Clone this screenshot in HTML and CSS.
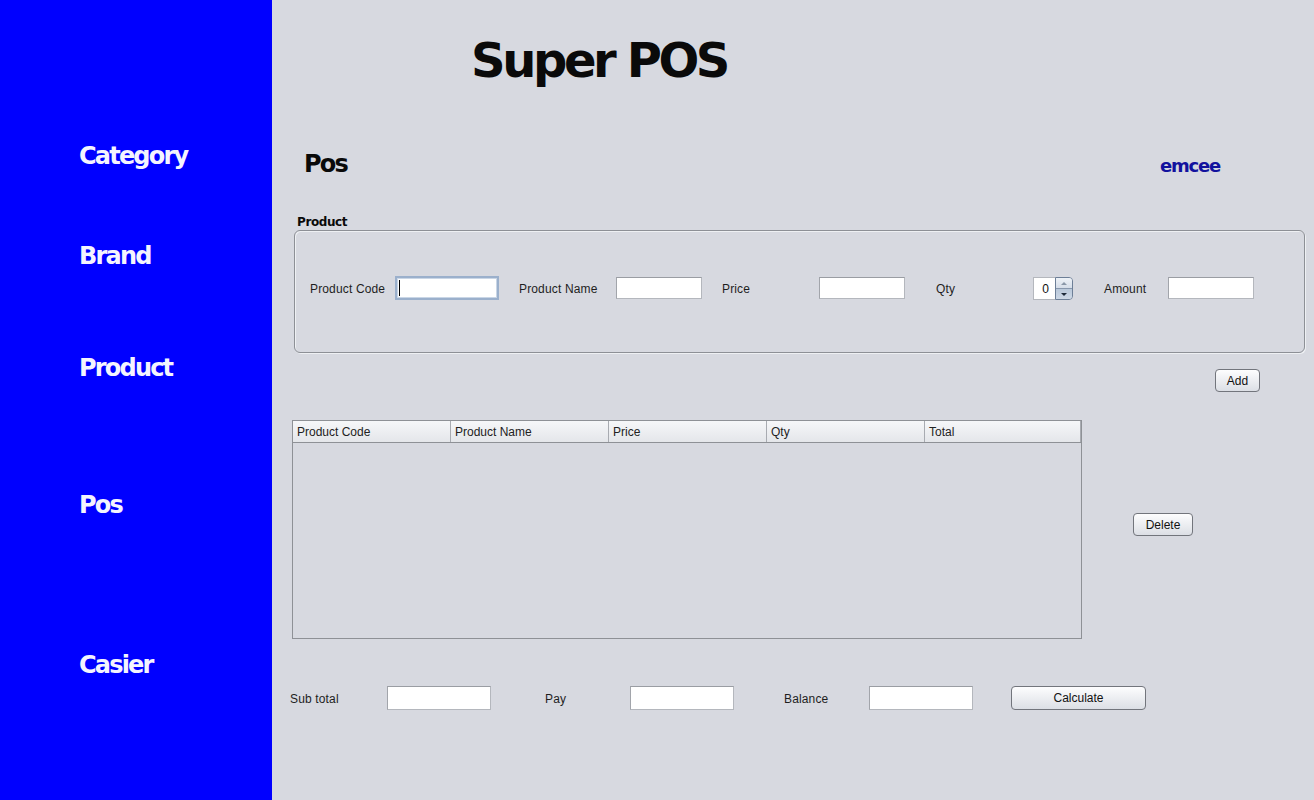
FILE: index.html
```html
<!DOCTYPE html>
<html>
<head>
<meta charset="utf-8">
<title>Super POS</title>
<link rel="stylesheet" href="styles.css">
</head>
<body>
<div class="app">
  <nav class="sidebar">
    <div class="nav-item nav-category">Category</div>
    <div class="nav-item nav-brand">Brand</div>
    <div class="nav-item nav-product">Product</div>
    <div class="nav-item nav-pos">Pos</div>
    <div class="nav-item nav-casier">Casier</div>
  </nav>
  <main class="main">
    <h1 class="title">Super POS</h1>
    <div class="page-head">
      <h2 class="page-title">Pos</h2>
      <div class="user">emcee</div>
    </div>
    <div class="group-label">Product</div>
    <div class="group">
      <div class="form-row">
        <label class="lbl w85">Product Code</label>
        <div class="field focused w104"><span class="caret"></span></div>
        <label class="lbl ml20 w97">Product Name</label>
        <div class="field w86"></div>
        <label class="lbl ml20 w97">Price</label>
        <div class="field w86"></div>
        <label class="lbl ml31 w97">Qty</label>
        <div class="spinner">
          <div class="spin-value">0</div>
          <div class="spin-btns">
            <div class="spin-up"><span class="tri-up"></span></div>
            <div class="spin-down"><span class="tri-down"></span></div>
          </div>
        </div>
        <label class="lbl ml31 w64">Amount</label>
        <div class="field w86"></div>
      </div>
    </div>
    <div class="add-row">
      <button class="btn btn-add">Add</button>
    </div>
    <div class="table-row">
      <div class="table">
        <div class="thead">
          <div class="th">Product Code</div>
          <div class="th">Product Name</div>
          <div class="th">Price</div>
          <div class="th">Qty</div>
          <div class="th">Total</div>
        </div>
        <div class="tbody"></div>
      </div>
      <button class="btn btn-delete">Delete</button>
    </div>
    <div class="totals">
      <label class="lbl w97">Sub total</label>
      <div class="field w104 h24"></div>
      <label class="lbl ml54 w85">Pay</label>
      <div class="field w104 h24"></div>
      <label class="lbl ml50 w85">Balance</label>
      <div class="field w104 h24"></div>
      <button class="btn btn-calc">Calculate</button>
    </div>
  </main>
</div>
</body>
</html>
```
FILE: styles.css
```css
* { box-sizing: border-box; }
html, body { margin: 0; padding: 0; }
body {
  background: #d7d9e0;
  font-family: "Liberation Sans", Arial, sans-serif;
  font-size: 12px;
  color: #1a1a1a;
  width: 1314px;
  height: 800px;
  overflow: hidden;
}
.app { display: flex; height: 800px; }

.sidebar {
  width: 272px;
  flex: 0 0 272px;
  background: #0000ff;
  padding-left: 79px;
  display: flex;
  flex-direction: column;
}
.nav-item {
  font-family: "DejaVu Sans", Verdana, sans-serif;
  font-weight: bold;
  font-size: 24px;
  letter-spacing: -1.8px;
  line-height: 30px;
  height: 30px;
  color: #f4f4ff;
}
.nav-category { margin-top: 141px; }
.nav-brand { margin-top: 70px; }
.nav-product { margin-top: 82px; }
.nav-pos { margin-top: 107px; }
.nav-casier { margin-top: 130px; }

.main { flex: 1; display: flex; flex-direction: column; }

.title {
  margin: 36px 0 0 199px;
  font-family: "DejaVu Sans", Verdana, sans-serif;
  font-weight: bold;
  font-size: 48px;
  line-height: 48px;
  letter-spacing: -3.4px;
  color: #0a0a0a;
}
.page-head {
  margin-top: 64px;
  height: 32px;
  display: flex;
  align-items: center;
  justify-content: space-between;
  padding-left: 32px;
  padding-right: 94px;
}
.page-title {
  margin: 0;
  font-family: "DejaVu Sans", Verdana, sans-serif;
  font-weight: bold;
  font-size: 24px;
  letter-spacing: -1.8px;
  line-height: 30px;
  color: #0a0a0a;
}
.user {
  font-family: "DejaVu Sans", Verdana, sans-serif;
  font-weight: bold;
  font-size: 18px;
  letter-spacing: -1.2px;
  color: #12129e;
  padding-top: 3px;
}
.group-label {
  margin: 34px 0 0 25px;
  font-family: "DejaVu Sans", Verdana, sans-serif;
  font-weight: bold;
  font-size: 12px;
  letter-spacing: -0.4px;
  line-height: 16px;
  height: 16px;
  color: #0a0a0a;
}
.group {
  margin: 0 9px 0 22px;
  height: 123px;
  border: 1px solid #8d9096;
  border-radius: 6px;
  box-shadow: inset 1px 1px 0 #eef0f3, 1px 1px 0 #eef0f3;
  padding: 45px 0 0 15px;
}
.form-row { display: flex; align-items: center; height: 24px; }
.lbl {
  display: block;
  color: #1e1e1e;
  font-size: 12px;
  letter-spacing: 0.15px;
  white-space: nowrap;
  padding-top: 2px;
}
.w64 { width: 64px; }
.w85 { width: 85px; }
.w97 { width: 97px; }
.ml20 { margin-left: 20px; }
.ml31 { margin-left: 31px; }
.ml50 { margin-left: 50px; }
.ml54 { margin-left: 54px; }

.field {
  height: 22px;
  background: #ffffff;
  border: 1px solid #b4b7bd;
  border-top-color: #9a9da3;
  border-left-color: #a2a5ab;
  position: relative;
}
.field.h24 { height: 24px; }
.w86 { width: 86px; }
.w104 { width: 104px; }
.field.focused {
  height: 24px;
  border: 2px solid #9bb0cc;
  box-shadow: inset 0 0 0 1px #c9d6e6;
}
.caret {
  position: absolute;
  left: 2px;
  top: 2px;
  width: 1px;
  height: 16px;
  background: #000;
}

.spinner { display: flex; width: 40px; height: 23px; margin-top: 1px; }
.spin-value {
  width: 22px;
  height: 23px;
  background: #fff;
  border: 1px solid #b4b7bd;
  border-right: none;
  text-align: right;
  padding-right: 6px;
  line-height: 22px;
  font-size: 12px;
  color: #111;
}
.spin-btns {
  width: 18px;
  height: 23px;
  display: flex;
  flex-direction: column;
  border: 1px solid #6d7f97;
  border-radius: 0 4px 4px 0;
  overflow: hidden;
}
.spin-up, .spin-down {
  flex: 1;
  display: flex;
  align-items: center;
  justify-content: center;
}
.spin-up { background: linear-gradient(#eef2f7, #d5dde8); border-bottom: 1px solid #8797ad; }
.spin-down { background: linear-gradient(#b9c8da, #cdd8e6); }
.tri-up {
  width: 0; height: 0;
  border-left: 3px solid transparent;
  border-right: 3px solid transparent;
  border-bottom: 3px solid #8a97a8;
}
.tri-down {
  width: 0; height: 0;
  border-left: 3px solid transparent;
  border-right: 3px solid transparent;
  border-top: 3px solid #1e2a3a;
}

.btn {
  font-family: "Liberation Sans", Arial, sans-serif;
  font-size: 12px;
  color: #111;
  background: linear-gradient(#fdfdfe, #e9ebef 60%, #dcdfe5);
  border: 1px solid #72757c;
  border-radius: 4px;
  padding: 1px 0 0;
  height: 23px;
  line-height: 21px;
}
.add-row {
  margin-top: 16px;
  display: flex;
  justify-content: flex-end;
  padding-right: 54px;
}
.btn-add { width: 45px; }

.table-row { margin-top: 28px; display: flex; align-items: flex-start; }
.table {
  margin-left: 20px;
  width: 790px;
  height: 219px;
  border: 1px solid #8e9196;
  display: flex;
  flex-direction: column;
}
.thead { display: flex; height: 22px; border-bottom: 1px solid #8e9196; }
.th {
  width: 158px;
  padding-left: 4px;
  padding-top: 1px;
  line-height: 21px;
  font-size: 12px;
  color: #222;
  background: linear-gradient(#f6f7f9, #e4e6ea);
  border-right: 1px solid #a8abb1;
}
.th:last-child { width: 156px; }
.tbody { flex: 1; background: #d7d9e0; }
.btn-delete { width: 60px; margin: 93px 0 0 51px; }

.totals {
  margin-top: 47px;
  margin-left: 18px;
  display: flex;
  align-items: center;
  height: 24px;
}
.btn-calc { width: 135px; height: 24px; margin-left: 38px; }
```
